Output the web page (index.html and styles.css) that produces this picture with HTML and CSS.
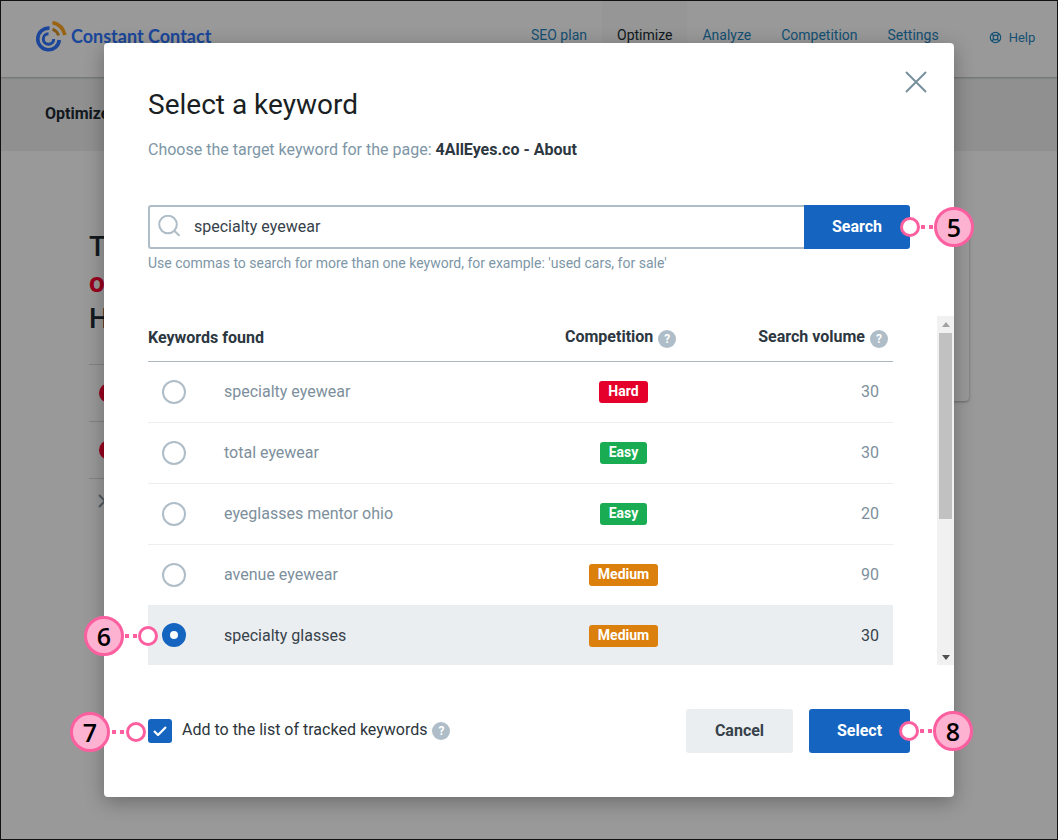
FILE: index.html
```html
<!DOCTYPE html>
<html lang="en">
<head>
<meta charset="utf-8">
<title>Select a keyword</title>
<link rel="stylesheet" href="styles.css">
</head>
<body>
<div class="frame">
  <header class="topbar">
    <div class="logo">
      <svg class="logo-mark" width="34" height="34" viewBox="0 0 34 34" fill="none">
        <path d="M15.5 9.2A10.8 10.8 0 1 0 25.3 21" stroke="#2d75ff" stroke-width="3.6"/>
        <path d="M14.5 14.8A5.2 5.2 0 1 0 19.7 20" stroke="#2d75ff" stroke-width="3"/>
        <path d="M18.5 3.6A17 17 0 0 1 31 16" stroke="#ffa51c" stroke-width="3.6"/>
        <path d="M18.5 10.2A10.6 10.6 0 0 1 24.6 16.5" stroke="#d8962c" stroke-width="3"/>
      </svg>
      <span class="logo-text">Constant Contact</span>
    </div>
    <nav class="nav">
      <span class="nav-item">SEO plan</span>
      <span class="nav-item nav-active">Optimize</span>
      <span class="nav-item">Analyze</span>
      <span class="nav-item">Competition</span>
      <span class="nav-item">Settings</span>
    </nav>
    <div class="help">
      <svg width="13" height="13" viewBox="0 0 13 13" fill="none" stroke="#1f86c0" stroke-width="1.2"><circle cx="6.5" cy="6.5" r="5.2"/><circle cx="6.5" cy="6.5" r="2.4"/><path d="M3 3l2 2M10 3L8 5M3 10l2-2M10 10L8 8"/></svg>
      <span>Help</span>
    </div>
  </header>
  <div class="subbar">Optimize</div>
  <main class="page-body">
    <section class="bg-main">
      <div class="bg-title">T</div>
      <div class="bg-title bg-red">o</div>
      <div class="bg-title">H</div>
      <div class="bg-rows">
        <div class="bg-row"><span class="bg-dot"></span></div>
        <div class="bg-row"><span class="bg-dot"></span></div>
        <div class="bg-row">
          <svg class="bg-x" width="14" height="14" viewBox="0 0 14 14" fill="none" stroke="#8a9aa5" stroke-width="2"><path d="M1 1l12 12M13 1L1 13"/></svg>
        </div>
      </div>
    </section>
    <aside class="side-card"></aside>
  </main>

  <div class="overlay"></div>

  <div class="modal">
    <button class="close" aria-label="Close">
      <svg width="22" height="22" viewBox="0 0 22 22" fill="none" stroke="#78909c" stroke-width="2"><path d="M1 1l20 20M21 1L1 21"/></svg>
    </button>
    <h1 class="modal-title">Select a keyword</h1>
    <p class="modal-sub">Choose the target keyword for the page: <strong>4AllEyes.co - About</strong></p>

    <div class="search">
      <div class="search-field">
        <svg width="24" height="24" viewBox="0 0 24 24" fill="none" stroke="#aebdc7" stroke-width="2"><circle cx="10" cy="9.5" r="8.8"/><path d="M16.2 15.8l5.3 5"/></svg>
        <span>specialty eyewear</span>
      </div>
      <div class="search-btn">Search</div>
    </div>
    <p class="hint">Use commas to search for more than one keyword, for example: 'used cars, for sale'</p>

    <div class="table-wrap">
      <div class="table">
        <div class="thead">
          <span class="col-name"><span class="th-name">Keywords found</span></span>
          <span class="col-comp"><span class="th-label">Competition</span> <i class="q">?</i></span>
          <span class="col-vol"><span class="th-label">Search volume</span> <i class="q">?</i></span>
        </div>
        <div class="row">
          <span class="radio"></span><span class="kw">specialty eyewear</span>
          <span class="cell-comp"><b class="tag hard">Hard</b></span><span class="vol">30</span>
        </div>
        <div class="row">
          <span class="radio"></span><span class="kw">total eyewear</span>
          <span class="cell-comp"><b class="tag easy">Easy</b></span><span class="vol">30</span>
        </div>
        <div class="row">
          <span class="radio"></span><span class="kw">eyeglasses mentor ohio</span>
          <span class="cell-comp"><b class="tag easy">Easy</b></span><span class="vol">20</span>
        </div>
        <div class="row">
          <span class="radio"></span><span class="kw">avenue eyewear</span>
          <span class="cell-comp"><b class="tag medium">Medium</b></span><span class="vol">90</span>
        </div>
        <div class="row selected">
          <span class="radio checked"></span><span class="kw">specialty glasses</span>
          <span class="cell-comp"><b class="tag medium">Medium</b></span><span class="vol">30</span>
        </div>
      </div>
      <div class="scrollbar">
        <span class="arrow up"></span>
        <span class="thumb"></span>
        <span class="arrow down"></span>
      </div>
    </div>

    <div class="footer">
      <div class="track">
        <span class="check">
          <svg width="14" height="10" viewBox="0 0 14 10" fill="none" stroke="#fff" stroke-width="2.2"><path d="M1 5l4 4 8-8"/></svg>
        </span>
        <span class="track-label">Add to the list of tracked keywords</span>
        <i class="q">?</i>
      </div>
      <div class="actions">
        <div class="btn btn-cancel"><span>Cancel</span></div>
        <div class="btn btn-select"><span>Select</span></div>
      </div>
    </div>
  </div>

  <div class="callout c5"><span class="dot"></span><span class="dash"></span><span class="num">5</span></div>
  <div class="callout c6"><span class="num">6</span><span class="dash"></span><span class="dot"></span></div>
  <div class="callout c7"><span class="num">7</span><span class="dash"></span><span class="dot"></span></div>
  <div class="callout c8"><span class="dot"></span><span class="dash"></span><span class="num">8</span></div>
</div>
</body>
</html>
```

FILE: styles.css
```css
* { box-sizing: border-box; }
html, body { margin: 0; padding: 0; }
body { font-family: Roboto, "Liberation Sans", sans-serif; color: #212b32; }
.frame {
  position: relative;
  width: 1058px;
  height: 840px;
  overflow: hidden;
  border: 1px solid #111;
  background: #fff;
}
.topbar {
  height: 76px;
  background: #fff;
  box-shadow: 0 1px 2px rgba(0,0,0,.25);
  display: flex;
  padding-left: 33px;
  position: relative;
}
.logo { display: flex; align-items: flex-start; gap: 3px; width: 482px; padding-top: 18px; }
.logo-text { font-family: Lato, sans-serif; font-weight: 700; font-size: 18px; line-height: 22px; color: #2d75ff; margin-top: 6px; }
.nav { display: flex; font-size: 14px; color: #1f86c0; }
.nav-item { padding: 26px 15px 0; height: 76px; }
.nav-active { color: #212b32; background: #f8faf8; }
.help { display: flex; align-items: center; gap: 7px; margin-left: 35px; height: 72px; font-size: 13px; color: #1f86c0; }
.subbar {
  height: 74px;
  background: #f0f1f2;
  padding: 27px 0 0 44px;
  font-weight: 700;
  font-size: 16px;
}
.page-body { display: flex; justify-content: space-between; padding: 0 88px 0 88px; }
.bg-main { width: 500px; padding-top: 78px; }
.bg-title { font-size: 28px; font-weight: 500; line-height: 36px; }
.bg-red { font-weight: 700; color: #ff0033; }
.bg-rows { margin-top: 27px; }
.bg-row { height: 57px; border-top: 1px solid #ddd; display: flex; align-items: center; }
.bg-dot { width: 20px; height: 20px; margin-left: 10px; border-radius: 50%; background: #ff0033; }
.bg-x { margin: -12px 0 0 9px; }
.side-card {
  width: 200px;
  height: 170px;
  margin-top: 80px;
  background: #fff;
  border-radius: 4px;
  box-shadow: 0 1px 3px rgba(0,0,0,.35);
}
.overlay { position: absolute; inset: 0; background: rgba(0,0,0,.4); }

.modal {
  position: absolute;
  left: 103px;
  top: 42px;
  width: 850px;
  height: 754px;
  padding: 44px 0 0 44px;
  background: #fff;
  border-radius: 4px;
  box-shadow: 0 5px 20px rgba(0,0,0,.3);
}
.close { position: absolute; top: 28px; right: 27px; padding: 0; border: 0; background: none; display: block; height: 22px; }
.modal-title { margin: 0; font-size: 28px; font-weight: 400; line-height: 36px; color: #1a1f24; }
.modal-sub { margin: 16px 0 0; font-size: 16px; line-height: 22px; color: #7d96a6; }
.modal-sub strong { color: #2c373f; font-weight: 700; }
.search { display: flex; height: 44px; margin-top: 44px; width: 762px; }
.search-field {
  flex: 1;
  display: flex;
  align-items: center;
  gap: 12px;
  padding: 0 0 1px 8px;
  border: 2px solid #aebdc7;
  border-right: 0;
  border-radius: 3px 0 0 3px;
  font-size: 16px;
  color: #37424a;
}
.search-btn {
  width: 106px;
  display: flex;
  align-items: center;
  justify-content: center;
  padding-bottom: 1px;
  background: #1565c0;
  color: #fff;
  font-weight: 700;
  font-size: 16px;
  border-radius: 0 3px 3px 0;
}
.hint { margin: 4px 0 0; font-size: 14px; line-height: 20px; color: #7d96a6; }
.table-wrap { display: flex; margin-top: 43px; height: 349px; width: 806px; }
.table { width: 745px; flex: none; }
.thead { display: flex; align-items: center; height: 46px; border-bottom: 1px solid #aeb7bf; font-weight: 700; font-size: 16px; white-space: nowrap; color: #2c373f; }
.col-name { width: 417px; }
.th-name { position: relative; top: -1px; }
.col-comp { width: 156px; display: flex; align-items: center; gap: 5px; }
.col-vol { flex: 1; display: flex; align-items: center; justify-content: flex-end; gap: 5px; padding-right: 5px; }
.th-label { position: relative; top: -2px; }
.q {
  width: 18px; height: 18px; border-radius: 50%;
  background: #aebdc7; color: #fff;
  font-style: normal; font-weight: 700; font-size: 12px;
  display: inline-flex; align-items: center; justify-content: center;
  flex: none;
}
.row { display: flex; align-items: center; height: 61px; border-bottom: 1px solid #eceff1; color: #7d8f9c; font-size: 16px; }
.row.selected { background: #ebeef1; color: #37424a; border-bottom: 0; height: 60px; margin-top: -1px; position: relative; }
.radio { width: 24px; height: 24px; margin-left: 14px; border-radius: 50%; border: 2px solid #aebdc7; flex: none; background: #fff; }
.radio.checked { border: 8px solid #1565c0; }
.kw { margin-left: 38px; width: 305px; flex: none; padding-bottom: 2px; }
.selected .kw { padding-bottom: 0; }
.cell-comp { width: 189px; flex: none; display: flex; justify-content: center; }
.selected .cell-comp { padding-top: 1px; }
.tag { padding: 0 9px; height: 22px; line-height: 21px; border-radius: 3px; color: #fff; font-size: 14px; font-weight: 700; }
.hard { background: #e4002b; }
.easy { background: #19ac52; }
.medium { background: #dc800d; }
.vol { flex: 1; text-align: right; padding: 0 14px 2px 0; }
.selected .vol { padding-bottom: 0; }
.scrollbar { margin-left: 44px; width: 17px; flex: none; background: #f1f1f1; position: relative; }
.arrow { position: absolute; left: 5px; border-left: 4px solid transparent; border-right: 4px solid transparent; }
.arrow.up { top: 6px; border-bottom: 5px solid #a3a3a3; }
.arrow.down { bottom: 5px; border-top: 5px solid #505050; }
.thumb { position: absolute; top: 17px; left: 2px; width: 13px; height: 186px; background: #c1c1c1; }
.footer { display: flex; justify-content: space-between; align-items: center; margin-top: 44px; width: 762px; }
.track { display: flex; align-items: center; font-size: 16px; color: #2c353b; }
.check { width: 24px; height: 24px; border-radius: 3px; background: #1565c0; display: flex; align-items: center; justify-content: center; margin-right: 10px; }
.track-label { margin-right: 5px; position: relative; top: -2px; }
.actions { display: flex; gap: 16px; }
.btn { height: 44px; display: flex; align-items: center; justify-content: center; padding-bottom: 1px; font-weight: 700; font-size: 16px; border-radius: 3px; }
.btn-cancel { width: 107px; background: #ebeef1; color: #37424a; }
.btn-select { width: 101px; background: #1565c0; color: #fff; }

.callout { position: absolute; display: flex; align-items: center; height: 40px; }
.num {
  width: 40px; height: 40px; border-radius: 50%;
  background: #feb2d1; border: 3.5px solid #fb5fa0;
  display: flex; align-items: center; justify-content: center;
  font-family: "Open Sans", sans-serif; font-weight: 600; font-size: 25px; color: #000;
  flex: none;
}
.dot { width: 20px; height: 20px; border-radius: 50%; background: #fff; border: 3.5px solid #fb5fa0; flex: none; }
.dash {
  width: 12px; height: 4px; margin: 0 1px; flex: none;
  background: linear-gradient(to right, #fb5fa0 4px, transparent 4px, transparent 8px, #fb5fa0 8px);
}
.c5 { left: 899px; top: 206px; }
.c6 { left: 83px; top: 615px; }
.c7 { left: 69px; top: 711px; }
.c7 .dash { margin: 0 2px; }
.c8 { left: 898px; top: 710px; }
```
